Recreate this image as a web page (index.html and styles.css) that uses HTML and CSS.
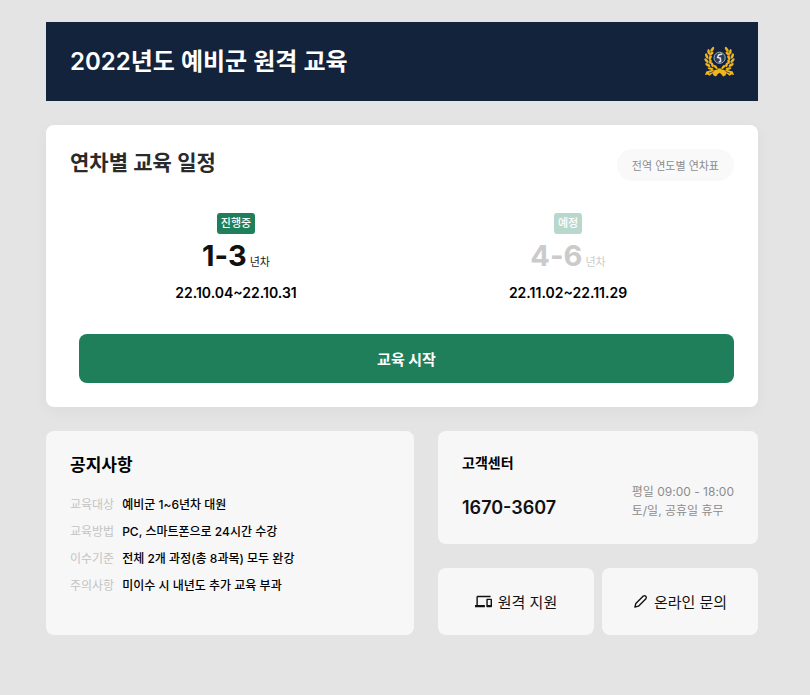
FILE: index.html
```html
<!DOCTYPE html>
<html lang="ko">

<head>
  <meta charset="UTF-8">
  <meta name="viewport" content="width=device-width, initial-scale=1.0">
  <title>2022년도 예비군 원격 교육</title>
  <link rel="stylesheet" href="styles.css">
</head>

<body>
  <div class="container">
    <header class="header">
      <h1>2022년도 예비군 원격 교육</h1>
      <svg class="emblem" viewBox="0 0 32 32" aria-hidden="true">
        <g id="branch" fill="#f0b41c">
          <ellipse cx="8.4" cy="3.2" rx="1.3" ry="2.7" transform="rotate(32 8.4 3.2)" />
          <ellipse cx="4.6" cy="5.6" rx="1.3" ry="2.7" transform="rotate(-4 4.6 5.6)" />
          <ellipse cx="7.4" cy="7.6" rx="1.3" ry="2.5" transform="rotate(50 7.4 7.6)" />
          <ellipse cx="2.6" cy="10" rx="1.3" ry="2.8" transform="rotate(-22 2.6 10)" />
          <ellipse cx="6.2" cy="11.6" rx="1.3" ry="2.4" transform="rotate(30 6.2 11.6)" />
          <ellipse cx="2.5" cy="14.6" rx="1.3" ry="2.9" transform="rotate(-40 2.5 14.6)" />
          <ellipse cx="6.4" cy="15.6" rx="1.3" ry="2.4" transform="rotate(8 6.4 15.6)" />
          <ellipse cx="3.8" cy="19" rx="1.3" ry="2.9" transform="rotate(-60 3.8 19)" />
          <ellipse cx="8.4" cy="18.8" rx="1.3" ry="2.4" transform="rotate(-18 8.4 18.8)" />
          <ellipse cx="6.6" cy="22.6" rx="1.2" ry="3" transform="rotate(-80 6.6 22.6)" />
          <ellipse cx="11.6" cy="21" rx="1.3" ry="2.3" transform="rotate(-42 11.6 21)" />
          <path d="M7.5 3C3.5 10 4 18 15.6 23.4" fill="none" stroke="#f0b41c" stroke-width="0.7" />
          <path d="M16 22.4L9.6 24.6 8.6 23.8 2.2 25.6 1 29 3.6 28.4 5.4 29.8 8.6 27.2 9.6 29.6 12 30.4 13.8 28 16 26.4z" />
          <path d="M5 27.2L9.4 25.4" fill="none" stroke="#14233c" stroke-width="0.7" />
        </g>
        <use href="#branch" transform="translate(31 0) scale(-1 1)" />
        <circle cx="15.6" cy="11.8" r="5.6" fill="#2c3b5a" stroke="#a4abba" stroke-width="1" />
        <path d="M18.2 8L14.6 9 13.6 11.4 16.4 12.2 16.6 15.2 14.8 16" fill="none" stroke="#dfe2e8" stroke-width="1.5" />
      </svg>
    </header>

    <section class="schedule">
      <div class="schedule-top">
        <h2>연차별 교육 일정</h2>
        <button class="year-table" type="button">전역 연도별 연차표</button>
      </div>
      <div class="terms">
        <div class="term">
          <span class="badge">진행중</span>
          <p class="years"><strong>1-3</strong> <span>년차</span></p>
          <p class="period">22.10.04~22.10.31</p>
        </div>
        <div class="term">
          <span class="badge badge-soon">예정</span>
          <p class="years years-soon"><strong>4-6</strong> <span>년차</span></p>
          <p class="period">22.11.02~22.11.29</p>
        </div>
      </div>
      <button class="start" type="button">교육 시작</button>
    </section>

    <div class="bottom">
      <section class="box notice">
        <h3>공지사항</h3>
        <dl>
          <dt>교육대상</dt>
          <dd>예비군 1~6년차 대원</dd>
          <dt>교육방법</dt>
          <dd>PC, 스마트폰으로 24시간 수강</dd>
          <dt>이수기준</dt>
          <dd>전체 2개 과정(총 8과목) 모두 완강</dd>
          <dt>주의사항</dt>
          <dd>미이수 시 내년도 추가 교육 부과</dd>
        </dl>
      </section>

      <div class="side">
        <section class="box center">
          <h3>고객센터</h3>
          <div class="contact">
            <p class="tel">1670-3607</p>
            <p class="hours">평일 09:00 - 18:00<br>토/일, 공휴일 휴무</p>
          </div>
        </section>
        <div class="links">
          <a class="box link" href="#">
            <svg class="icon" viewBox="0 0 24 24" aria-hidden="true">
              <path fill="currentColor" d="M4 6h18V4H4c-1.1 0-2 .9-2 2v11H0v3h14v-3H4V6zm19 2h-6c-.55 0-1 .45-1 1v10c0 .55.45 1 1 1h6c.55 0 1-.45 1-1V9c0-.55-.45-1-1-1zm-1 9h-4v-7h4v7z" />
            </svg>
            원격 지원
          </a>
          <a class="box link" href="#">
            <svg class="icon icon-pen" viewBox="0 0 16 16" fill="none" stroke="currentColor" stroke-width="1.5" stroke-linejoin="round" aria-hidden="true">
              <path d="M2 14L3 10.2 11 2.2Q12.4 1.2 13.6 2.4Q14.8 3.6 13.8 5L5.8 13z" />
            </svg>
            온라인 문의
          </a>
        </div>
      </div>
    </div>
  </div>
</body>

</html>
```
FILE: styles.css
```css
* {
  box-sizing: border-box;
}

body {
  margin: 0;
  padding: 22px 52px 60px 46px;
  background-color: #e4e4e4;
  font-family: Inter, "Noto Sans CJK KR", sans-serif;
  color: #000;
}

h1, h2, h3, p, dl, dd {
  margin: 0;
}

button {
  border: 0;
  font-family: inherit;
  cursor: pointer;
}

.container {
  display: flex;
  flex-direction: column;
  gap: 24px;
}

.header {
  display: flex;
  justify-content: space-between;
  align-items: center;
  padding: 20px 22px 19px 24px;
  background-color: #14233c;
  color: #fff;
}

.header h1 {
  font-size: 24px;
  font-weight: 600;
  line-height: 40px;
}

.emblem {
  width: 32px;
  height: 32px;
}

.schedule {
  padding: 24px;
  border-radius: 8px;
  background-color: #fff;
  box-shadow: 0 4px 16px rgba(0, 0, 0, 0.04);
}

.schedule-top {
  display: flex;
  justify-content: space-between;
  align-items: flex-start;
}

.schedule h2 {
  font-size: 21px;
  font-weight: 600;
  line-height: 27px;
  color: #2a2a2a;
}

.year-table {
  height: 32px;
  padding: 0 15px;
  border-radius: 16px;
  background-color: #f9f9f9;
  font-size: 11px;
  color: #8c8c8c;
}

.terms {
  display: grid;
  grid-template-columns: 1fr 1fr;
  margin-top: 32px;
  text-align: center;
}

.term {
  display: flex;
  flex-direction: column;
  align-items: center;
}

.badge {
  padding: 0 4px;
  border-radius: 3px;
  background-color: #1e7f5a;
  font-size: 11px;
  font-weight: 500;
  line-height: 21px;
  color: #fff;
}

.badge-soon {
  background-color: #b9d8cd;
}

.years {
  font-size: 11px;
  line-height: 43px;
  color: #222;
}

.years strong {
  font-size: 29px;
  font-weight: 700;
  color: #111;
}

.years-soon,
.years-soon strong {
  color: #cbcbcb;
}

.period {
  font-size: 14px;
  font-weight: 600;
  line-height: 18px;
}

.start {
  display: block;
  width: calc(100% - 9px);
  height: 49px;
  margin: 32px 0 0 9px;
  border-radius: 8px;
  background-color: #1e7f5a;
  font-size: 15px;
  font-weight: 700;
  color: #fff;
}

.bottom {
  display: grid;
  grid-template-columns: 1fr 320px;
  gap: 24px;
}

.box {
  border-radius: 8px;
  background-color: #f7f7f7;
}

.notice {
  padding: 24px;
}

.notice h3 {
  font-size: 17px;
  font-weight: 700;
  line-height: 20px;
}

.notice dl {
  display: grid;
  grid-template-columns: auto 1fr;
  column-gap: 8px;
  margin-top: 16px;
  font-size: 12px;
  line-height: 27px;
}

.notice dt {
  color: #c4c4c4;
}

.notice dd {
  font-weight: 500;
}

.side {
  display: flex;
  flex-direction: column;
  gap: 24px;
}

.center {
  padding: 24px;
}

.center h3 {
  font-size: 14px;
  font-weight: 600;
  line-height: 16px;
}

.contact {
  display: flex;
  justify-content: space-between;
  align-items: flex-end;
  margin-top: 11px;
}

.tel {
  font-size: 18px;
  font-weight: 600;
  line-height: 24px;
  color: #111;
}

.hours {
  font-size: 12px;
  line-height: 19px;
  color: #8c8c8c;
}

.links {
  display: grid;
  grid-template-columns: 1fr 1fr;
  gap: 8px;
}

.link {
  display: flex;
  justify-content: center;
  align-items: center;
  gap: 6px;
  height: 67px;
  font-size: 15px;
  color: #111;
  text-decoration: none;
}

.icon {
  width: 17px;
  height: 17px;
}

.icon-pen {
  width: 15px;
  height: 15px;
}
```
